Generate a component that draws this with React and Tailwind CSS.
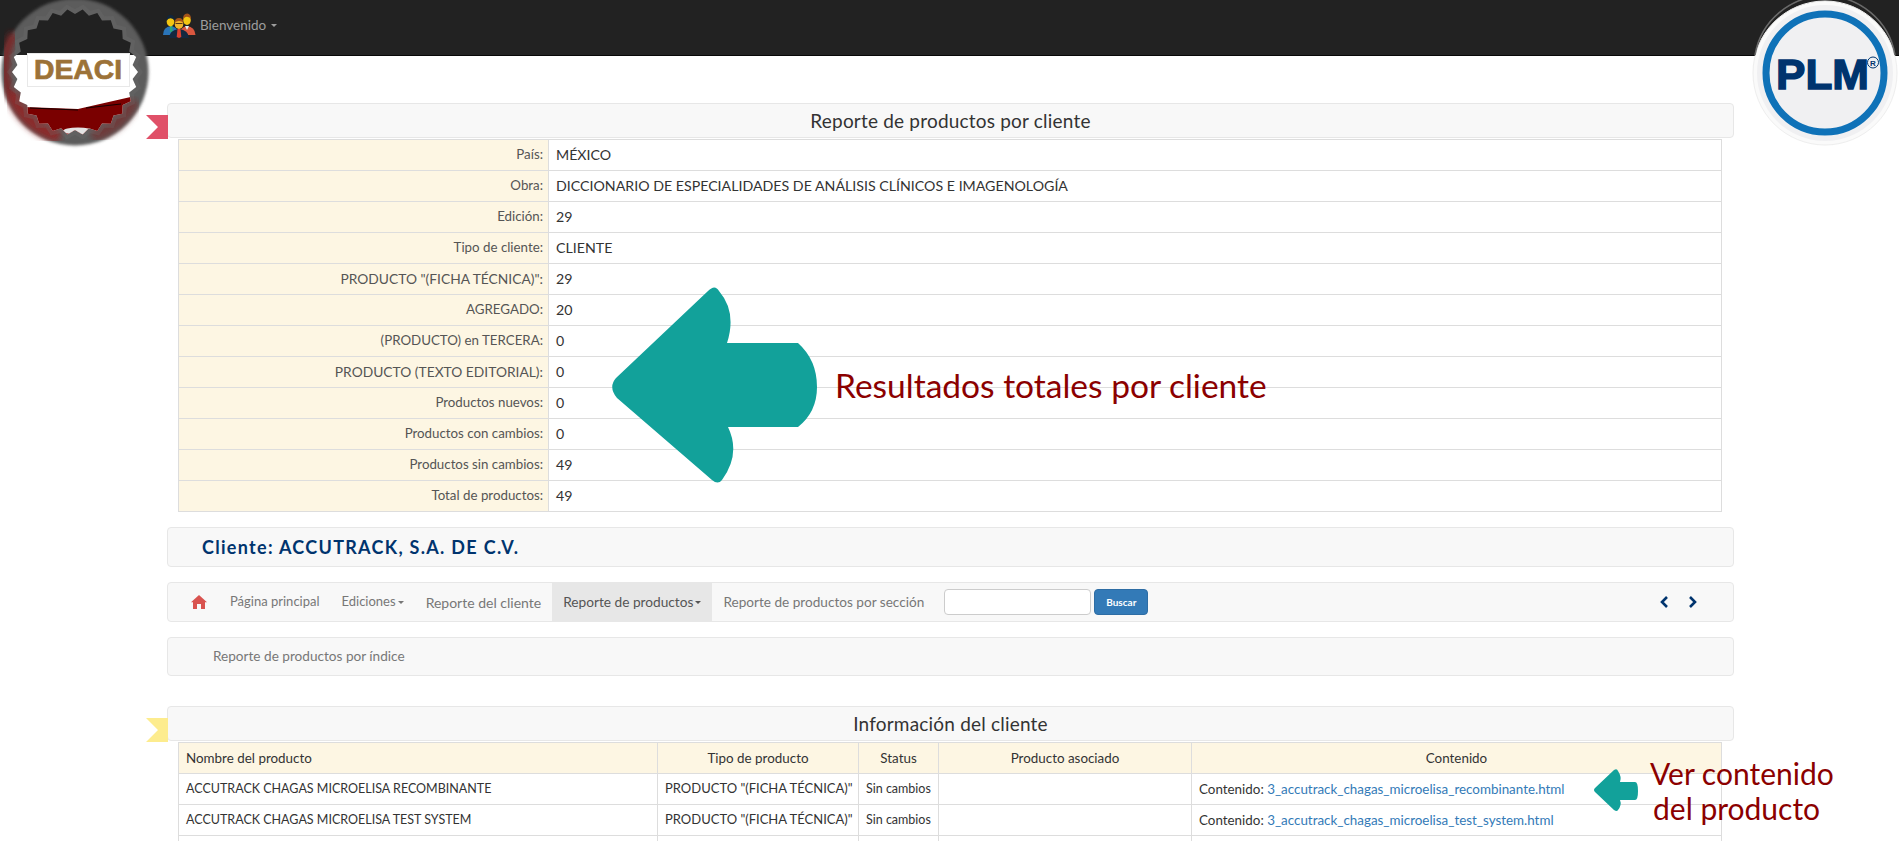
import React from 'react';

const SUMMARY = [
    ['País:', 'MÉXICO'],
    ['Obra:', 'DICCIONARIO DE ESPECIALIDADES DE ANÁLISIS CLÍNICOS E IMAGENOLOGÍA'],
    ['Edición:', '29'],
    ['Tipo de cliente:', 'CLIENTE'],
    ['PRODUCTO "(FICHA TÉCNICA)":', '29'],
    ['AGREGADO:', '20'],
    ['(PRODUCTO) en TERCERA:', '0'],
    ['PRODUCTO (TEXTO EDITORIAL):', '0'],
    ['Productos nuevos:', '0'],
    ['Productos con cambios:', '0'],
    ['Productos sin cambios:', '49'],
    ['Total de productos:', '49'],
];

const PRODUCTS = [
    ['ACCUTRACK CHAGAS MICROELISA RECOMBINANTE', '3_accutrack_chagas_microelisa_recombinante.html'],
    ['ACCUTRACK CHAGAS MICROELISA TEST SYSTEM', '3_accutrack_chagas_microelisa_test_system.html'],
];

const jagged = (cx, cy, r1, r2, n) => {
    const pts = [];
    for (let i = 0; i < n * 2; i++) {
        const r = i % 2 ? r1 : r2;
        const a = (Math.PI * i) / n;
        pts.push(`${(cx + r * Math.cos(a)).toFixed(1)},${(cy + r * Math.sin(a)).toFixed(1)}`);
    }
    return pts.join(' ');
};

const DeaciLogo = () => (
    <svg width="156" height="150" viewBox="0 0 156 150" className="absolute left-0 top-0">
        <defs>
            <filter id="soft" x="-10%" y="-10%" width="120%" height="120%">
                <feGaussianBlur stdDeviation="1.6" />
            </filter>
            <filter id="softer" x="-10%" y="-10%" width="120%" height="120%">
                <feGaussianBlur stdDeviation="3" />
            </filter>
            <clipPath id="inner">
                <polygon points={jagged(75, 72, 58, 63, 26)} />
            </clipPath>
        </defs>
        <circle cx="75" cy="72" r="73.500" fill="#5c5c5c" filter="url(#soft)" />
        <path d="M 14 34 A 68 68 0 0 0 12 98" fill="none" stroke="#7a2525" strokeWidth="9" filter="url(#softer)" />
        <path d="M 12 92 A 66 66 0 0 0 60 136" fill="none" stroke="#8a2c2c" strokeWidth="14" filter="url(#softer)" />
        <path d="M 92 136 A 66 66 0 0 0 134 100" fill="none" stroke="#6e3a3a" strokeWidth="12" filter="url(#softer)" />
        <polygon points={jagged(75, 72, 63, 68, 26)} fill="#707070" opacity="0.25" />
        <g clipPath="url(#inner)">
            <rect x="0" y="0" width="156" height="55" fill="#212121" />
            <rect x="0" y="55" width="156" height="90" fill="#ffffff" />
            <polygon points="24,107 78,109 135,96 135,140 20,140" fill="#7a0000" />
            <polyline points="30,108 78,110" fill="none" stroke="#160000" strokeWidth="1.2" />
            <polyline points="86,108 121,104" fill="none" stroke="#160000" strokeWidth="1.2" />
            <ellipse cx="78" cy="131" rx="15" ry="3.500" fill="#e4e4e4" />
        </g>
        <rect x="27.500" y="53.500" width="102" height="33" fill="#ffffff" stroke="#e8e8e8" />
        <text x="34" y="79" fontFamily="Liberation Sans, sans-serif" fontWeight="700" fontSize="27" textLength="88" lengthAdjust="spacingAndGlyphs" fill="#9c7238" stroke="#9c7238" strokeWidth="0.7">DEACI</text>
    </svg>
);

const PlmLogo = () => (
    <svg width="148" height="148" viewBox="0 0 148 148" className="absolute right-0 top-0">
        <circle cx="74" cy="73" r="72" fill="#fafafa" stroke="#eeeeee" />
        <path d="M 4 55 A 71 71 0 0 1 144 55" fill="none" stroke="#6a6a6a" strokeWidth="1.5" />
        <circle cx="74" cy="73" r="68" fill="#f0f0f2" />
        <circle cx="74" cy="73" r="59" fill="#f0f0f2" stroke="#0f72b8" strokeWidth="7" />
        <text x="25" y="89" fontFamily="Liberation Sans, sans-serif" fontWeight="700" fontSize="42" textLength="93" lengthAdjust="spacingAndGlyphs" fill="#00346e" stroke="#00346e" strokeWidth="1.4">PLM</text>
        <circle cx="122" cy="62.500" r="5.500" fill="none" stroke="#00346e" strokeWidth="1" />
        <text x="122" y="65.500" textAnchor="middle" fontFamily="Liberation Sans, sans-serif" fontWeight="700" fontSize="8" fill="#00346e">R</text>
    </svg>
);

const PeopleIcon = () => (
    <svg width="34" height="26" viewBox="0 0 34 26" className="mr-[4px]">
        {/* back left */}
        <path d="M1 23 q0 -8 8 -9 q7 1 8 9z" fill="#2a74b8" />
        <path d="M8 14 h2.400 l0.400 6 h-3z" fill="#2aa57a" />
        <ellipse cx="8.500" cy="9.500" rx="3.800" ry="5" fill="#f3c612" />
        <path d="M4.600 9 q-0.400 -6 4 -6.200 q4.200 0.200 3.800 6 q-1 -2.400 -3.800 -2.600 q-3 0.200 -4 2.800z" fill="#10263c" />
        {/* back right */}
        <path d="M17 23 q1 -8 8 -9 q8 1 8.500 9z" fill="#d9573f" />
        <path d="M23 14 h4 l-2 4z" fill="#e8f4f4" />
        <ellipse cx="25" cy="8" rx="3.800" ry="5" fill="#f3c612" />
        <path d="M21 8 q-0.400 -6.400 4.200 -6.600 q4 0.200 3.800 6.200 q-1 -2.600 -4 -2.800 q-3 0.200 -4 3.200z" fill="#a3541a" />
        {/* front */}
        <path d="M7 26 q0.500 -8 10 -9 q9.500 1 10 9z" fill="#13283f" />
        <path d="M15.500 17 h3 l0.800 8 l-2.300 1 l-2.300 -1z" fill="#d9412f" />
        <ellipse cx="17" cy="12" rx="4.300" ry="5" fill="#f3b52a" />
        <path d="M12.700 11 q0 -5 4.300 -5 q4.300 0 4.300 5 q-1.500 -2 -4.300 -2 q-2.800 0 -4.300 2z" fill="#a3541a" />
        <path d="M13.500 11.500 h7" stroke="#5a3a10" strokeWidth="1" />
    </svg>
);

const BigArrow = () => (
    <svg width="220" height="210" viewBox="0 0 220 210" className="absolute left-[610px] top-[282px]">
        <path d="M6 96 L98 9 Q105 2 109 9 Q127 30 117 61 L188 61 Q207 78 207 105 Q207 130 188 145 L118 145 Q131 172 112 198 Q108 203 102 198 L7 116 Q-2 105 6 96 Z" fill="#12a19a" />
    </svg>
);

const SmallArrow = () => (
    <svg width="48" height="46" viewBox="0 0 48 46" className="absolute left-[1592px] top-[767px]">
        <path d="M3 21 L22 3 Q25 1 26 4 Q30 10 28 15 L43 15 Q46 15 46 24 Q46 33 43 33 L28 33 Q30 38 26 43 Q25 45 22 43 L3 25 Q1 23 3 21 Z" fill="#12a19a" />
    </svg>
);

const Ribbon = ({ color }) => (
    <svg width="22" height="24" viewBox="0 0 22 24" className="absolute left-[-22px] top-[11px]">
        <polygon points="0,0 22,0 22,24 0,24 12,12" fill={color} />
    </svg>
);

const SectionHeader = ({ title, color }) => (
    <div className="relative h-[35px] flex items-center justify-center pt-[2px] bg-[#f8f8f8] border border-[#e7e7e7] rounded text-[19px] tracking-[0.2px] text-[#333]">
        <Ribbon color={color} />
        {title}
    </div>
);

const NavLink = ({ children, caret, active, size }) => (
    <div className={`h-full flex items-center px-[11px] ${size} ${active ? 'bg-[#e7e7e7] text-[#555]' : 'text-[#777]'}`}>
        {children}
        {caret && <span className="ml-[2px] w-0 h-0 border-x-[3px] border-x-transparent border-t-[3px] border-t-current" />}
    </div>
);

export default function App() {
    return (
        <div className="relative h-[841px] overflow-hidden bg-white text-[#333] text-[13px]" style={{ fontFamily: 'Lato, "Noto Sans", sans-serif' }}>
            {/* Top navbar */}
            <div className="h-[56px] bg-[#222] border-b border-[#080808] pl-[162px] pt-[12px]">
                <div className="flex items-center text-[#9d9d9d] text-[13.500px]">
                    <PeopleIcon />
                    Bienvenido
                    <span className="ml-[5px] w-0 h-0 border-x-[3px] border-x-transparent border-t-[3px] border-t-[#9d9d9d]" />
                </div>
            </div>

            <div className="pl-[167px] pr-[165px] pt-[47px]">
                <SectionHeader title="Reporte de productos por cliente" color="#e05068" />

                {/* Totals table */}
                <div className="ml-[11px] mr-[12px] mt-[1px]">
                    <table className="w-full table-fixed border-collapse">
                        <colgroup>
                            <col className="w-[370px]" />
                            <col />
                        </colgroup>
                        <tbody>
                            {SUMMARY.map(([label, value]) => (
                                <tr key={label} className="h-[31px]">
                                    <td className={`border border-[#ddd] bg-[#fdf6e3] text-right px-[5px] py-0 text-[#555] ${/PRODUCTO [("]/.test(label) ? 'text-[13.800px]' : 'text-[13.300px]'}`}>{label}</td>
                                    <td className="border border-[#ddd] text-[14.200px] px-[7px] py-0">{value}</td>
                                </tr>
                            ))}
                        </tbody>
                    </table>
                </div>

                {/* Client name */}
                <div className="mt-[15px] h-[40px] flex items-center pl-[34px] bg-[#f8f8f8] border border-[#e7e7e7] rounded text-[18px] font-bold tracking-[1.3px] text-[#00346e]">
                    Cliente: ACCUTRACK, S.A. DE C.V.
                </div>

                {/* Report nav */}
                <div className="mt-[15px] h-[40px] flex items-center bg-[#f8f8f8] border border-[#e7e7e7] rounded pl-[23px] pr-[31px]">
                    <svg width="16" height="14" viewBox="0 0 16 14" className="mr-[12px]">
                        <path d="M8 0 L16 7.2 L14 7.2 L14 14 L10 14 L10 9 L6 9 L6 14 L2 14 L2 7.2 L0 7.2 Z" fill="#d9534f" />
                    </svg>
                    <NavLink size="text-[13px]">Página principal</NavLink>
                    <NavLink size="text-[13px]" caret>Ediciones</NavLink>
                    <NavLink size="text-[14px]">Reporte del cliente</NavLink>
                    <NavLink size="text-[13.700px]" caret active>Reporte de productos</NavLink>
                    <NavLink size="text-[13.600px]">Reporte de productos por sección</NavLink>
                    <input className="ml-[9px] w-[147px] h-[26px] bg-white border border-[#ccc] rounded" />
                    <button className="ml-[3px] w-[54px] h-[26px] bg-[#337ab7] border border-[#2e6da4] rounded text-white text-[10px] font-bold">Buscar</button>
                    <svg width="44" height="14" viewBox="0 0 44 14" className="ml-auto" fill="none" stroke="#00346e" strokeWidth="2.6">
                        <polyline points="9,2 4,7 9,12" />
                        <polyline points="32,2 37,7 32,12" />
                    </svg>
                </div>

                <div className="mt-[15px] h-[39px] flex items-center pl-[45px] bg-[#f8f8f8] border border-[#e7e7e7] rounded text-[13.600px] text-[#777]">
                    Reporte de productos por índice
                </div>

                <div className="mt-[30px]">
                    <SectionHeader title="Información del cliente" color="#fdec8e" />
                </div>

                {/* Products table */}
                <div className="ml-[11px] mr-[12px] mt-[1px]">
                    <table className="w-full table-fixed border-collapse">
                        <colgroup>
                            <col className="w-[479px]" />
                            <col className="w-[201px]" />
                            <col className="w-[80px]" />
                            <col className="w-[253px]" />
                            <col />
                        </colgroup>
                        <thead>
                            <tr className="h-[31px] bg-[#fdf6e3] text-[13.400px]">
                                <th className="border border-[#ddd] px-[7px] py-0 text-left font-normal">Nombre del producto</th>
                                <th className="border border-[#ddd] px-[7px] py-0 font-normal">Tipo de producto</th>
                                <th className="border border-[#ddd] px-[7px] py-0 font-normal">Status</th>
                                <th className="border border-[#ddd] px-[7px] py-0 font-normal">Producto asociado</th>
                                <th className="border border-[#ddd] px-[7px] py-0 font-normal">Contenido</th>
                            </tr>
                        </thead>
                        <tbody>
                            {PRODUCTS.map(([name, file]) => (
                                <tr key={name} className="h-[31px]">
                                    <td className="border border-[#ddd] px-[7px] py-0 text-[12.500px]">{name}</td>
                                    <td className="border border-[#ddd] px-[7px] py-0 whitespace-nowrap">PRODUCTO "(FICHA TÉCNICA)"</td>
                                    <td className="border border-[#ddd] px-[7px] py-0 text-[12.500px] whitespace-nowrap">Sin cambios</td>
                                    <td className="border border-[#ddd] px-[7px] py-0"></td>
                                    <td className="border border-[#ddd] px-[7px] py-0 text-[13.400px]">Contenido: <span className="text-[#337ab7]">{file}</span></td>
                                </tr>
                            ))}
                            <tr className="h-[31px]">
                                <td className="border border-[#ddd]"></td>
                                <td className="border border-[#ddd]"></td>
                                <td className="border border-[#ddd]"></td>
                                <td className="border border-[#ddd]"></td>
                                <td className="border border-[#ddd]"></td>
                            </tr>
                        </tbody>
                    </table>
                </div>
            </div>

            {/* Logos over the navbar */}
            <DeaciLogo />
            <PlmLogo />

            {/* Annotations drawn over the page */}
            <BigArrow />
            <div className="absolute left-[835px] top-[363px] text-[33.500px] leading-[44px] whitespace-nowrap text-[#8b0000]">Resultados totales por cliente</div>
            <SmallArrow />
            <div className="absolute left-[1650px] top-[756px] text-[30px] leading-[35px] whitespace-nowrap text-[#8b0000]">
                Ver contenido<br /><span className="ml-[3px]">del producto</span>
            </div>
        </div>
    );
}
